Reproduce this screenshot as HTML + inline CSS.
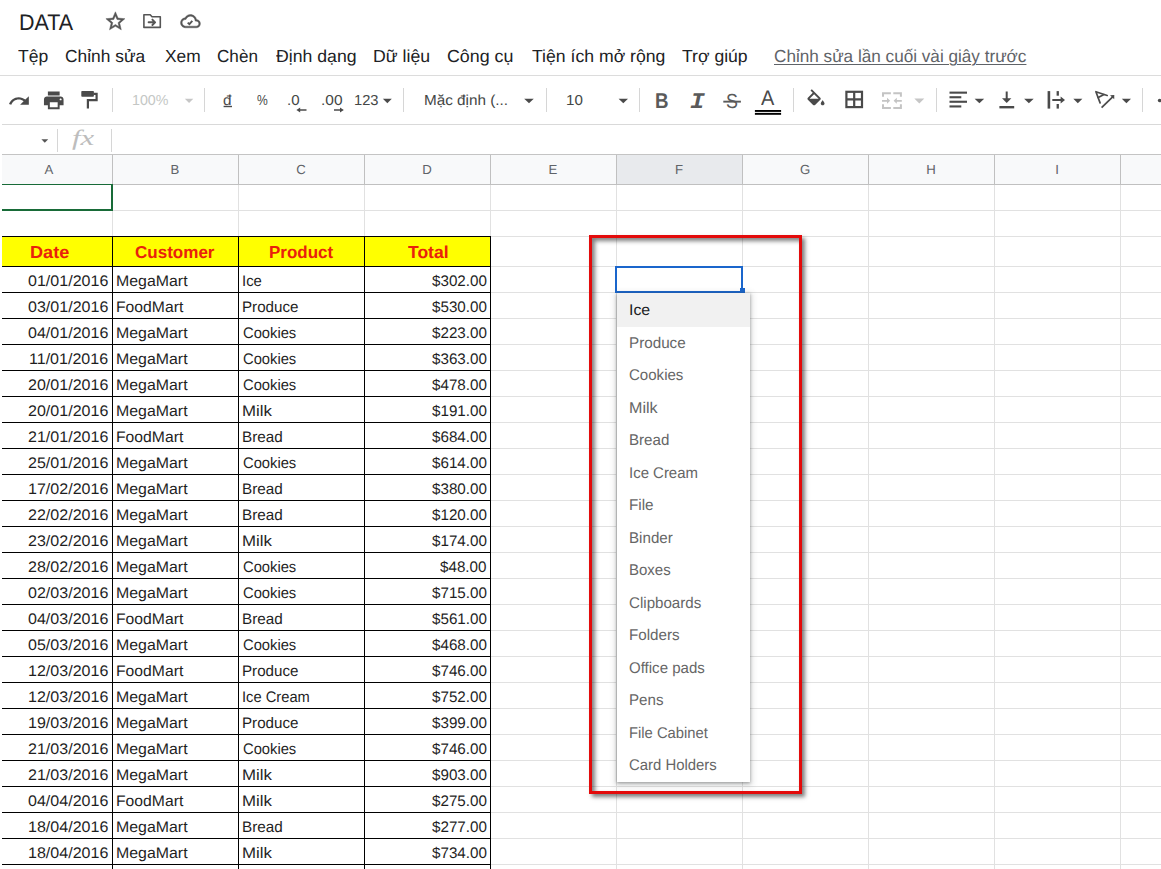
<!DOCTYPE html>
<html lang="vi">
<head>
<meta charset="utf-8">
<title>DATA</title>
<style>
html,body{margin:0;padding:0;}
body{width:1161px;height:869px;overflow:hidden;background:#fff;position:relative;font-family:"Liberation Sans",sans-serif;text-rendering:geometricPrecision;}
.t{position:absolute;white-space:nowrap;display:block;transform-origin:0 50%;}
.abs{position:absolute;}
.hl{position:absolute;height:1px;}
.vl{position:absolute;width:1px;}
svg{position:absolute;overflow:visible;}
</style>
</head>
<body>
<div class="hl" style="left:0;top:75px;width:1161px;background:#dcdcdc"></div>
<div class="hl" style="left:0;top:124px;width:1161px;background:#d9d9d9"></div>
<div class="hl" style="left:2px;top:154px;width:1159px;background:#c4c4c4"></div>
<div class="vl" style="left:112px;top:88px;height:24px;background:#d6d6d6"></div>
<div class="vl" style="left:204px;top:88px;height:24px;background:#d6d6d6"></div>
<div class="vl" style="left:403px;top:88px;height:24px;background:#d6d6d6"></div>
<div class="vl" style="left:546px;top:88px;height:24px;background:#d6d6d6"></div>
<div class="vl" style="left:638.5px;top:88px;height:24px;background:#d6d6d6"></div>
<div class="vl" style="left:792.5px;top:88px;height:24px;background:#d6d6d6"></div>
<div class="vl" style="left:936px;top:88px;height:24px;background:#d6d6d6"></div>
<div class="vl" style="left:1142px;top:88px;height:24px;background:#d6d6d6"></div>
<div class="vl" style="left:57px;top:129px;height:23px;background:#d6d6d6"></div>
<div class="vl" style="left:111px;top:129px;height:23px;background:#d6d6d6"></div>
<div class="abs" style="left:2px;top:155px;width:1159px;height:29px;background:#f8f9fa"></div>
<div class="abs" style="left:617px;top:155px;width:125px;height:29px;background:#e8eaed"></div>
<div class="hl" style="left:2px;top:184px;width:1159px;background:#c0c0c0"></div>
<div class="vl" style="left:112px;top:155px;height:30px;background:#c0c0c0"></div>
<div class="vl" style="left:112px;top:185px;height:684px;background:#e1e1e1"></div>
<div class="vl" style="left:238px;top:155px;height:30px;background:#c0c0c0"></div>
<div class="vl" style="left:238px;top:185px;height:684px;background:#e1e1e1"></div>
<div class="vl" style="left:364px;top:155px;height:30px;background:#c0c0c0"></div>
<div class="vl" style="left:364px;top:185px;height:684px;background:#e1e1e1"></div>
<div class="vl" style="left:490px;top:155px;height:30px;background:#c0c0c0"></div>
<div class="vl" style="left:490px;top:185px;height:684px;background:#e1e1e1"></div>
<div class="vl" style="left:616px;top:155px;height:30px;background:#c0c0c0"></div>
<div class="vl" style="left:616px;top:185px;height:684px;background:#e1e1e1"></div>
<div class="vl" style="left:742px;top:155px;height:30px;background:#c0c0c0"></div>
<div class="vl" style="left:742px;top:185px;height:684px;background:#e1e1e1"></div>
<div class="vl" style="left:868px;top:155px;height:30px;background:#c0c0c0"></div>
<div class="vl" style="left:868px;top:185px;height:684px;background:#e1e1e1"></div>
<div class="vl" style="left:994px;top:155px;height:30px;background:#c0c0c0"></div>
<div class="vl" style="left:994px;top:185px;height:684px;background:#e1e1e1"></div>
<div class="vl" style="left:1120px;top:155px;height:30px;background:#c0c0c0"></div>
<div class="vl" style="left:1120px;top:185px;height:684px;background:#e1e1e1"></div>
<div class="hl" style="left:2px;top:210px;width:1159px;background:#e1e1e1"></div>
<div class="hl" style="left:2px;top:236px;width:1159px;background:#e1e1e1"></div>
<div class="hl" style="left:2px;top:266px;width:1159px;background:#e1e1e1"></div>
<div class="hl" style="left:2px;top:292px;width:1159px;background:#e1e1e1"></div>
<div class="hl" style="left:2px;top:318px;width:1159px;background:#e1e1e1"></div>
<div class="hl" style="left:2px;top:344px;width:1159px;background:#e1e1e1"></div>
<div class="hl" style="left:2px;top:370px;width:1159px;background:#e1e1e1"></div>
<div class="hl" style="left:2px;top:396px;width:1159px;background:#e1e1e1"></div>
<div class="hl" style="left:2px;top:422px;width:1159px;background:#e1e1e1"></div>
<div class="hl" style="left:2px;top:448px;width:1159px;background:#e1e1e1"></div>
<div class="hl" style="left:2px;top:474px;width:1159px;background:#e1e1e1"></div>
<div class="hl" style="left:2px;top:500px;width:1159px;background:#e1e1e1"></div>
<div class="hl" style="left:2px;top:526px;width:1159px;background:#e1e1e1"></div>
<div class="hl" style="left:2px;top:552px;width:1159px;background:#e1e1e1"></div>
<div class="hl" style="left:2px;top:578px;width:1159px;background:#e1e1e1"></div>
<div class="hl" style="left:2px;top:604px;width:1159px;background:#e1e1e1"></div>
<div class="hl" style="left:2px;top:630px;width:1159px;background:#e1e1e1"></div>
<div class="hl" style="left:2px;top:656px;width:1159px;background:#e1e1e1"></div>
<div class="hl" style="left:2px;top:682px;width:1159px;background:#e1e1e1"></div>
<div class="hl" style="left:2px;top:708px;width:1159px;background:#e1e1e1"></div>
<div class="hl" style="left:2px;top:734px;width:1159px;background:#e1e1e1"></div>
<div class="hl" style="left:2px;top:760px;width:1159px;background:#e1e1e1"></div>
<div class="hl" style="left:2px;top:786px;width:1159px;background:#e1e1e1"></div>
<div class="hl" style="left:2px;top:812px;width:1159px;background:#e1e1e1"></div>
<div class="hl" style="left:2px;top:838px;width:1159px;background:#e1e1e1"></div>
<div class="hl" style="left:2px;top:864px;width:1159px;background:#e1e1e1"></div>
<div class="abs" style="left:2px;top:237px;width:488px;height:29px;background:#ffff00"></div>
<div class="hl" style="left:2px;top:236px;width:489px;background:#000"></div>
<div class="hl" style="left:2px;top:266px;width:489px;background:#000"></div>
<div class="hl" style="left:2px;top:292px;width:489px;background:#000"></div>
<div class="hl" style="left:2px;top:318px;width:489px;background:#000"></div>
<div class="hl" style="left:2px;top:344px;width:489px;background:#000"></div>
<div class="hl" style="left:2px;top:370px;width:489px;background:#000"></div>
<div class="hl" style="left:2px;top:396px;width:489px;background:#000"></div>
<div class="hl" style="left:2px;top:422px;width:489px;background:#000"></div>
<div class="hl" style="left:2px;top:448px;width:489px;background:#000"></div>
<div class="hl" style="left:2px;top:474px;width:489px;background:#000"></div>
<div class="hl" style="left:2px;top:500px;width:489px;background:#000"></div>
<div class="hl" style="left:2px;top:526px;width:489px;background:#000"></div>
<div class="hl" style="left:2px;top:552px;width:489px;background:#000"></div>
<div class="hl" style="left:2px;top:578px;width:489px;background:#000"></div>
<div class="hl" style="left:2px;top:604px;width:489px;background:#000"></div>
<div class="hl" style="left:2px;top:630px;width:489px;background:#000"></div>
<div class="hl" style="left:2px;top:656px;width:489px;background:#000"></div>
<div class="hl" style="left:2px;top:682px;width:489px;background:#000"></div>
<div class="hl" style="left:2px;top:708px;width:489px;background:#000"></div>
<div class="hl" style="left:2px;top:734px;width:489px;background:#000"></div>
<div class="hl" style="left:2px;top:760px;width:489px;background:#000"></div>
<div class="hl" style="left:2px;top:786px;width:489px;background:#000"></div>
<div class="hl" style="left:2px;top:812px;width:489px;background:#000"></div>
<div class="hl" style="left:2px;top:838px;width:489px;background:#000"></div>
<div class="hl" style="left:2px;top:864px;width:489px;background:#000"></div>
<div class="vl" style="left:112px;top:236px;height:633px;background:#000"></div>
<div class="vl" style="left:238px;top:236px;height:633px;background:#000"></div>
<div class="vl" style="left:364px;top:236px;height:633px;background:#000"></div>
<div class="vl" style="left:490px;top:236px;height:633px;background:#000"></div>
<div class="abs" style="left:-4px;top:184px;width:113px;height:24px;border:2px solid #186b38;border-top-width:1.5px"></div>
<div class="abs" style="left:589px;top:235px;width:207px;height:553px;border:3px solid #e30b0b;box-shadow:3px 3px 4px rgba(0,0,0,.5), inset 3px 3px 4px rgba(0,0,0,.5)"></div>
<div class="abs" style="left:615px;top:266px;width:124px;height:22.5px;border:2px solid #1a66cc;border-left-width:2.5px;background:#fff"></div>
<div class="abs" style="left:740px;top:288px;width:5px;height:5px;background:#1a66cc"></div>
<div class="abs" style="left:617px;top:293px;width:133px;height:489px;background:#fff;box-shadow:0 2px 6px 2px rgba(60,64,67,.17),0 1px 3px 0 rgba(40,40,40,.42)"></div>
<div class="abs" style="left:617px;top:293px;width:133px;height:34px;background:#f1f1f1"></div>
<svg width="1161" height="160" viewBox="0 0 1161 160" style="left:0;top:0">
<g transform="translate(104,9.9) scale(0.95)" fill="#555" stroke="#555" stroke-width="0.5"><path d="M22 9.24l-7.19-.62L12 2 9.19 8.63 2 9.24l5.46 4.73L5.82 21 12 17.27 18.18 21l-1.63-7.03L22 9.24zM12 15.4l-3.76 2.27 1-4.28-3.32-2.88 4.38-.38L12 6.1l1.71 4.04 4.38.38-3.32 2.88 1 4.28L12 15.4z"/></g>
<g fill="none" stroke="#555" stroke-width="1.6" stroke-linejoin="round" stroke-linecap="round"><path d="M143.9,14.8H150.2L152,16.7H160.3V27.4H143.9Z"/><path d="M148.6,22.3H155M152.4,19.6L155.1,22.3L152.4,25" stroke-width="1.9"/></g>
<g transform="translate(180.5,11.2) scale(0.83)" fill="#555" stroke="#555" stroke-width="0.5"><path d="M19.35 10.04C18.67 6.59 15.64 4 12 4 9.11 4 6.6 5.64 5.35 8.04 2.34 8.36 0 10.91 0 14c0 3.31 2.69 6 6 6h13c2.76 0 5-2.24 5-5 0-2.64-2.05-4.78-4.65-4.96zM19 18H6c-2.21 0-4-1.79-4-4 0-2.05 1.53-3.76 3.56-3.97l1.07-.11.5-.95C8.08 7.14 9.94 6 12 6c2.62 0 4.88 1.86 5.39 4.43l.3 1.5 1.53.11c1.56.1 2.78 1.41 2.78 2.96 0 1.65-1.35 3-3 3z"/></g>
<path d="M187.7,22.6L189.4,24.2L192.3,20.9" fill="none" stroke="#555" stroke-width="1.9"/>
<g transform="translate(7.5,89.5) scale(0.97,0.955)" fill="#4a4a4a"><path d="M18.4 10.6C16.55 8.99 14.15 8 11.5 8c-4.65 0-8.58 3.03-9.96 7.22L3.9 16c1.05-3.19 4.05-5.5 7.6-5.5 1.95 0 3.73.72 5.12 1.88L13 16h9V7l-3.6 3.6z"/></g>
<g transform="translate(42,88.6) scale(0.98)" fill="#4a4a4a"><path d="M19 8H5c-1.66 0-3 1.34-3 3v6h4v4h12v-4h4v-6c0-1.66-1.34-3-3-3zm-3 11H8v-5h8v5zm3-7c-.55 0-1-.45-1-1s.45-1 1-1 1 .45 1 1-.45 1-1 1zm-1-9H6v4h12V3z"/></g>
<rect x="81.3" y="91" width="12.6" height="5.8" rx="0.8" fill="#4a4a4a"/><path d="M93.5,93.9H96.6V100.2H87.9V108.5" fill="none" stroke="#4a4a4a" stroke-width="2.2"/>
<path d="M184.8,98.8H193.3L189.05,103Z" fill="#c6c6c6"/>
<path d="M382.9,98.7H391.8L387.35,103.3Z" fill="#4a4a4a"/>
<path d="M524.2,98.7H533.8L529.00,103.3Z" fill="#4a4a4a"/>
<path d="M618.6,98.7H628.0L623.30,103.3Z" fill="#4a4a4a"/>
<path d="M914.3,98.4H924.3L919.30,103.4Z" fill="#c6c6c6"/>
<path d="M974.6,98.7H984.2L979.40,103.3Z" fill="#4a4a4a"/>
<path d="M1024.1,98.7H1033.7L1028.90,103.3Z" fill="#4a4a4a"/>
<path d="M1073.3,98.7H1082.4L1077.85,103.3Z" fill="#4a4a4a"/>
<path d="M1121.8,98.7H1131.0L1126.40,103.3Z" fill="#4a4a4a"/>
<path d="M41.4,139.3H48.2L44.80,142.8Z" fill="#555"/>
<g fill="none" stroke="#4a4a4a" stroke-width="1.5"><path d="M306.5,110H298"/><path d="M334,110H342.3"/></g>
<path d="M296.4,110L300.2,107.6V112.4Z" fill="#4a4a4a"/><path d="M343.8,110L340,107.6V112.4Z" fill="#4a4a4a"/>
<rect x="223.6" y="105.8" width="8.4" height="1.4" fill="#4a4a4a"/>
<rect x="723.3" y="100.7" width="17.6" height="1.9" fill="#5a5a5a"/>
<rect x="754.9" y="110" width="26.2" height="1.9" fill="#000"/><rect x="754.9" y="112.9" width="26.2" height="1.9" fill="#000"/>
<g transform="translate(804.6,89.2) scale(0.95)" fill="#4a4a4a"><path d="M16.56 8.94L7.62 0 6.21 1.41l2.38 2.38-5.15 5.15c-.59.59-.59 1.54 0 2.12l5.5 5.5c.29.29.68.44 1.06.44s.77-.15 1.06-.44l5.5-5.5c.59-.58.59-1.53 0-2.12zM5.21 10L10 5.21 14.79 10H5.21zM19 11.5s-2 2.17-2 3.5c0 1.1.9 2 2 2s2-.9 2-2c0-1.33-2-3.5-2-3.5z"/></g>
<g fill="none" stroke="#4a4a4a" stroke-width="2.2"><rect x="846.4" y="91.8" width="15.6" height="15.3"/><path d="M854.2,91.8V107.1M846.4,99.45H862"/></g>
<g fill="none" stroke="#c4c4c4" stroke-width="2"><path d="M883,96.8V93.3H890.9M893.3,93.3H900.9V96.8M883,104.2V108.1H890.9M893.3,108.1H900.9V104.2"/><path d="M882,100.8H888.5M901.8,100.8H895.3" stroke-width="1.7"/></g><path d="M890.2,100.8L887,97.8V103.8ZM893.6,100.8L896.8,97.8V103.8Z" fill="#c4c4c4"/>
<g fill="#4a4a4a"><rect x="949.5" y="91.6" width="17.5" height="2.1"/><rect x="949.5" y="96.2" width="11.8" height="2.1"/><rect x="949.5" y="100.7" width="17.5" height="2.1"/><rect x="949.5" y="105.4" width="11.8" height="2.1"/></g>
<rect x="1005.7" y="91.5" width="2" height="8" fill="#4a4a4a"/><path d="M1002,98.3H1011.4L1006.7,103Z" fill="#4a4a4a"/><rect x="999.4" y="106" width="14.8" height="2.4" fill="#4a4a4a"/>
<g fill="#4a4a4a"><rect x="1047.6" y="91.1" width="2.6" height="17.5"/><rect x="1056.6" y="91.1" width="2.3" height="4.6"/><rect x="1056.6" y="104" width="2.3" height="4.6"/><rect x="1052.3" y="99" width="10" height="2"/><path d="M1065,100L1060.6,96.6V103.4Z"/></g>
<g fill="none" stroke="#4a4a4a" stroke-width="1.7" stroke-linecap="round" stroke-linejoin="round"><path d="M1107.2,95.5L1095.9,91.7L1100.1,102.9"/><path d="M1098.2,97.6L1104,94.6"/><path d="M1101.6,107.7L1113.2,96.4" stroke-linecap="butt"/></g><path d="M1110,95.3L1114.3,94.9L1114.2,99.2Z" fill="#4a4a4a"/>
<circle cx="1159.6" cy="100.5" r="1.8" fill="#4a4a4a"/>
</svg>

<div class="abs" style="left:0;top:76px;width:2px;height:793px;background:#fff"></div>
<span class="t" style="left:19.12px;top:8.01px;font-size:22.6px;line-height:29px;color:#202124;transform:scaleX(0.9500);">DATA</span>
<span class="t" style="left:17.93px;top:45.00px;font-size:17.4px;line-height:23px;color:#202124;transform:scaleX(1.0101);">Tệp</span>
<span class="t" style="left:65.19px;top:45.00px;font-size:17.4px;line-height:23px;color:#202124;transform:scaleX(0.9985);">Chỉnh sửa</span>
<span class="t" style="left:164.63px;top:45.00px;font-size:17.4px;line-height:23px;color:#202124;transform:scaleX(0.9970);">Xem</span>
<span class="t" style="left:217.20px;top:45.00px;font-size:17.4px;line-height:23px;color:#202124;transform:scaleX(0.9848);">Chèn</span>
<span class="t" style="left:275.80px;top:45.00px;font-size:17.4px;line-height:23px;color:#202124;transform:scaleX(1.0159);">Định dạng</span>
<span class="t" style="left:372.92px;top:45.00px;font-size:17.4px;line-height:23px;color:#202124;transform:scaleX(1.0168);">Dữ liệu</span>
<span class="t" style="left:446.96px;top:45.00px;font-size:17.4px;line-height:23px;color:#202124;transform:scaleX(1.0251);">Công cụ</span>
<span class="t" style="left:531.52px;top:45.00px;font-size:17.4px;line-height:23px;color:#202124;transform:scaleX(1.0138);">Tiện ích mở rộng</span>
<span class="t" style="left:682.42px;top:45.00px;font-size:17.4px;line-height:23px;color:#202124;transform:scaleX(1.0119);">Trợ giúp</span>
<span class="t" style="left:773.70px;top:45.00px;font-size:17.4px;line-height:23px;color:#5f6368;transform:scaleX(0.9859);text-decoration:underline;text-decoration-thickness:1px;text-underline-offset:1.5px;">Chỉnh sửa lần cuối vài giây trước</span>
<span class="t" style="left:131.71px;top:92.01px;font-size:14.5px;line-height:19px;color:#c4c7c5;transform:scaleX(0.9819);">100%</span>
<span class="t" style="left:257.42px;top:92.01px;font-size:14.5px;line-height:19px;color:#444746;transform:scaleX(0.8328);">%</span>
<span class="t" style="left:286.82px;top:92.01px;font-size:14.5px;line-height:19px;color:#444746;transform:scaleX(1.0378);">.0</span>
<span class="t" style="left:320.59px;top:92.01px;font-size:14.5px;line-height:19px;color:#444746;transform:scaleX(1.0663);">.00</span>
<span class="t" style="left:354.08px;top:92.01px;font-size:14.5px;line-height:19px;color:#444746;transform:scaleX(1.0133);">123</span>
<span class="t" style="left:423.81px;top:92.01px;font-size:14.5px;line-height:19px;color:#444746;transform:scaleX(1.0538);">Mặc định (...</span>
<span class="t" style="left:565.85px;top:92.01px;font-size:14.5px;line-height:19px;color:#444746;transform:scaleX(1.0430);">10</span>
<span class="t" style="left:223.22px;top:92.01px;font-size:14.5px;line-height:19px;color:#4a4a4a;transform:scaleX(1.0515);">đ</span>
<span class="t" style="left:654.83px;top:87.01px;font-size:21.4px;line-height:28px;color:#5a5a5a;font-weight:bold;transform:scaleX(0.8748);">B</span>
<span class="t" style="left:689.61px;top:88.01px;font-size:22.6px;line-height:29px;color:#5a5a5a;font-weight:bold;transform:scaleX(1.0955);font-family:'Liberation Mono',monospace;font-style:italic;">I</span>
<span class="t" style="left:726.24px;top:88.01px;font-size:20.5px;line-height:27px;color:#5a5a5a;transform:scaleX(0.8709);">S</span>
<span class="t" style="left:760.50px;top:85.00px;font-size:21px;line-height:27px;color:#4a4a4a;transform:scaleX(0.9497);">A</span>
<span class="t" style="left:72.30px;top:123.00px;font-size:22px;line-height:29px;color:#bdbdbd;transform:scaleX(1.4043);font-family:'Liberation Serif',serif;font-style:italic;">fx</span>
<span class="t" style="left:44.00px;top:161.00px;font-size:13.2px;line-height:17px;color:#5f6368;width:10.00px;text-align:center;">A</span>
<span class="t" style="left:170.00px;top:161.00px;font-size:13.2px;line-height:17px;color:#5f6368;width:10.00px;text-align:center;">B</span>
<span class="t" style="left:296.00px;top:161.00px;font-size:13.2px;line-height:17px;color:#5f6368;width:10.00px;text-align:center;">C</span>
<span class="t" style="left:422.00px;top:161.00px;font-size:13.2px;line-height:17px;color:#5f6368;width:10.00px;text-align:center;">D</span>
<span class="t" style="left:548.00px;top:161.00px;font-size:13.2px;line-height:17px;color:#5f6368;width:10.00px;text-align:center;">E</span>
<span class="t" style="left:674.00px;top:161.00px;font-size:13.2px;line-height:17px;color:#5f6368;width:10.00px;text-align:center;">F</span>
<span class="t" style="left:800.00px;top:161.00px;font-size:13.2px;line-height:17px;color:#5f6368;width:10.00px;text-align:center;">G</span>
<span class="t" style="left:926.00px;top:161.00px;font-size:13.2px;line-height:17px;color:#5f6368;width:10.00px;text-align:center;">H</span>
<span class="t" style="left:1052.00px;top:161.00px;font-size:13.2px;line-height:17px;color:#5f6368;width:10.00px;text-align:center;">I</span>
<span class="t" style="left:29.67px;top:241.01px;font-size:17.3px;line-height:22px;color:#e9210c;font-weight:bold;transform:scaleX(1.0476);">Date</span>
<span class="t" style="left:135.17px;top:241.01px;font-size:17.3px;line-height:22px;color:#e9210c;font-weight:bold;transform:scaleX(0.9855);">Customer</span>
<span class="t" style="left:268.94px;top:241.01px;font-size:17.3px;line-height:22px;color:#e9210c;font-weight:bold;transform:scaleX(0.9814);">Product</span>
<span class="t" style="left:408.30px;top:241.01px;font-size:17.3px;line-height:22px;color:#e9210c;font-weight:bold;transform:scaleX(1.0149);">Total</span>
<span class="t" style="left:27.50px;top:272.01px;font-size:15.3px;line-height:20px;color:#1f1f1f;transform:scaleX(1.0493);">01/01/2016</span>
<span class="t" style="left:116.16px;top:272.01px;font-size:15.3px;line-height:20px;color:#1f1f1f;transform:scaleX(1.0394);">MegaMart</span>
<span class="t" style="left:242.14px;top:272.01px;font-size:15.3px;line-height:20px;color:#1f1f1f;transform:scaleX(0.9734);">Ice</span>
<span class="t" style="left:432.00px;top:272.01px;font-size:15.3px;line-height:20px;color:#1f1f1f;transform:scaleX(0.9941);">$302.00</span>
<span class="t" style="left:27.50px;top:298.01px;font-size:15.3px;line-height:20px;color:#1f1f1f;transform:scaleX(1.0493);">03/01/2016</span>
<span class="t" style="left:116.17px;top:298.01px;font-size:15.3px;line-height:20px;color:#1f1f1f;transform:scaleX(1.0275);">FoodMart</span>
<span class="t" style="left:242.11px;top:298.01px;font-size:15.3px;line-height:20px;color:#1f1f1f;transform:scaleX(0.9915);">Produce</span>
<span class="t" style="left:432.00px;top:298.01px;font-size:15.3px;line-height:20px;color:#1f1f1f;transform:scaleX(0.9941);">$530.00</span>
<span class="t" style="left:27.50px;top:324.01px;font-size:15.3px;line-height:20px;color:#1f1f1f;transform:scaleX(1.0493);">04/01/2016</span>
<span class="t" style="left:116.16px;top:324.01px;font-size:15.3px;line-height:20px;color:#1f1f1f;transform:scaleX(1.0394);">MegaMart</span>
<span class="t" style="left:242.61px;top:324.01px;font-size:15.3px;line-height:20px;color:#1f1f1f;transform:scaleX(0.9634);">Cookies</span>
<span class="t" style="left:432.00px;top:324.01px;font-size:15.3px;line-height:20px;color:#1f1f1f;transform:scaleX(0.9941);">$223.00</span>
<span class="t" style="left:28.69px;top:350.01px;font-size:15.3px;line-height:20px;color:#1f1f1f;transform:scaleX(1.0493);">11/01/2016</span>
<span class="t" style="left:116.16px;top:350.01px;font-size:15.3px;line-height:20px;color:#1f1f1f;transform:scaleX(1.0394);">MegaMart</span>
<span class="t" style="left:242.61px;top:350.01px;font-size:15.3px;line-height:20px;color:#1f1f1f;transform:scaleX(0.9634);">Cookies</span>
<span class="t" style="left:432.00px;top:350.01px;font-size:15.3px;line-height:20px;color:#1f1f1f;transform:scaleX(0.9941);">$363.00</span>
<span class="t" style="left:27.50px;top:376.01px;font-size:15.3px;line-height:20px;color:#1f1f1f;transform:scaleX(1.0493);">20/01/2016</span>
<span class="t" style="left:116.16px;top:376.01px;font-size:15.3px;line-height:20px;color:#1f1f1f;transform:scaleX(1.0394);">MegaMart</span>
<span class="t" style="left:242.61px;top:376.01px;font-size:15.3px;line-height:20px;color:#1f1f1f;transform:scaleX(0.9634);">Cookies</span>
<span class="t" style="left:432.00px;top:376.01px;font-size:15.3px;line-height:20px;color:#1f1f1f;transform:scaleX(0.9941);">$478.00</span>
<span class="t" style="left:27.50px;top:402.01px;font-size:15.3px;line-height:20px;color:#1f1f1f;transform:scaleX(1.0493);">20/01/2016</span>
<span class="t" style="left:116.16px;top:402.01px;font-size:15.3px;line-height:20px;color:#1f1f1f;transform:scaleX(1.0394);">MegaMart</span>
<span class="t" style="left:241.98px;top:402.01px;font-size:15.3px;line-height:20px;color:#1f1f1f;transform:scaleX(1.1015);">Milk</span>
<span class="t" style="left:432.00px;top:402.01px;font-size:15.3px;line-height:20px;color:#1f1f1f;transform:scaleX(0.9941);">$191.00</span>
<span class="t" style="left:27.50px;top:428.01px;font-size:15.3px;line-height:20px;color:#1f1f1f;transform:scaleX(1.0493);">21/01/2016</span>
<span class="t" style="left:116.17px;top:428.01px;font-size:15.3px;line-height:20px;color:#1f1f1f;transform:scaleX(1.0275);">FoodMart</span>
<span class="t" style="left:242.11px;top:428.01px;font-size:15.3px;line-height:20px;color:#1f1f1f;transform:scaleX(0.9981);">Bread</span>
<span class="t" style="left:432.00px;top:428.01px;font-size:15.3px;line-height:20px;color:#1f1f1f;transform:scaleX(0.9941);">$684.00</span>
<span class="t" style="left:27.50px;top:454.01px;font-size:15.3px;line-height:20px;color:#1f1f1f;transform:scaleX(1.0493);">25/01/2016</span>
<span class="t" style="left:116.16px;top:454.01px;font-size:15.3px;line-height:20px;color:#1f1f1f;transform:scaleX(1.0394);">MegaMart</span>
<span class="t" style="left:242.61px;top:454.01px;font-size:15.3px;line-height:20px;color:#1f1f1f;transform:scaleX(0.9634);">Cookies</span>
<span class="t" style="left:432.00px;top:454.01px;font-size:15.3px;line-height:20px;color:#1f1f1f;transform:scaleX(0.9941);">$614.00</span>
<span class="t" style="left:27.50px;top:480.01px;font-size:15.3px;line-height:20px;color:#1f1f1f;transform:scaleX(1.0493);">17/02/2016</span>
<span class="t" style="left:116.16px;top:480.01px;font-size:15.3px;line-height:20px;color:#1f1f1f;transform:scaleX(1.0394);">MegaMart</span>
<span class="t" style="left:242.11px;top:480.01px;font-size:15.3px;line-height:20px;color:#1f1f1f;transform:scaleX(0.9981);">Bread</span>
<span class="t" style="left:432.00px;top:480.01px;font-size:15.3px;line-height:20px;color:#1f1f1f;transform:scaleX(0.9941);">$380.00</span>
<span class="t" style="left:27.50px;top:506.01px;font-size:15.3px;line-height:20px;color:#1f1f1f;transform:scaleX(1.0493);">22/02/2016</span>
<span class="t" style="left:116.16px;top:506.01px;font-size:15.3px;line-height:20px;color:#1f1f1f;transform:scaleX(1.0394);">MegaMart</span>
<span class="t" style="left:242.11px;top:506.01px;font-size:15.3px;line-height:20px;color:#1f1f1f;transform:scaleX(0.9981);">Bread</span>
<span class="t" style="left:432.00px;top:506.01px;font-size:15.3px;line-height:20px;color:#1f1f1f;transform:scaleX(0.9941);">$120.00</span>
<span class="t" style="left:27.50px;top:532.01px;font-size:15.3px;line-height:20px;color:#1f1f1f;transform:scaleX(1.0493);">23/02/2016</span>
<span class="t" style="left:116.16px;top:532.01px;font-size:15.3px;line-height:20px;color:#1f1f1f;transform:scaleX(1.0394);">MegaMart</span>
<span class="t" style="left:241.98px;top:532.01px;font-size:15.3px;line-height:20px;color:#1f1f1f;transform:scaleX(1.1015);">Milk</span>
<span class="t" style="left:432.00px;top:532.01px;font-size:15.3px;line-height:20px;color:#1f1f1f;transform:scaleX(0.9941);">$174.00</span>
<span class="t" style="left:27.50px;top:558.01px;font-size:15.3px;line-height:20px;color:#1f1f1f;transform:scaleX(1.0493);">28/02/2016</span>
<span class="t" style="left:116.16px;top:558.01px;font-size:15.3px;line-height:20px;color:#1f1f1f;transform:scaleX(1.0394);">MegaMart</span>
<span class="t" style="left:242.61px;top:558.01px;font-size:15.3px;line-height:20px;color:#1f1f1f;transform:scaleX(0.9634);">Cookies</span>
<span class="t" style="left:440.46px;top:558.01px;font-size:15.3px;line-height:20px;color:#1f1f1f;transform:scaleX(0.9941);">$48.00</span>
<span class="t" style="left:27.50px;top:584.01px;font-size:15.3px;line-height:20px;color:#1f1f1f;transform:scaleX(1.0493);">02/03/2016</span>
<span class="t" style="left:116.16px;top:584.01px;font-size:15.3px;line-height:20px;color:#1f1f1f;transform:scaleX(1.0394);">MegaMart</span>
<span class="t" style="left:242.61px;top:584.01px;font-size:15.3px;line-height:20px;color:#1f1f1f;transform:scaleX(0.9634);">Cookies</span>
<span class="t" style="left:432.00px;top:584.01px;font-size:15.3px;line-height:20px;color:#1f1f1f;transform:scaleX(0.9941);">$715.00</span>
<span class="t" style="left:27.50px;top:610.01px;font-size:15.3px;line-height:20px;color:#1f1f1f;transform:scaleX(1.0493);">04/03/2016</span>
<span class="t" style="left:116.17px;top:610.01px;font-size:15.3px;line-height:20px;color:#1f1f1f;transform:scaleX(1.0275);">FoodMart</span>
<span class="t" style="left:242.11px;top:610.01px;font-size:15.3px;line-height:20px;color:#1f1f1f;transform:scaleX(0.9981);">Bread</span>
<span class="t" style="left:432.00px;top:610.01px;font-size:15.3px;line-height:20px;color:#1f1f1f;transform:scaleX(0.9941);">$561.00</span>
<span class="t" style="left:27.50px;top:636.01px;font-size:15.3px;line-height:20px;color:#1f1f1f;transform:scaleX(1.0493);">05/03/2016</span>
<span class="t" style="left:116.16px;top:636.01px;font-size:15.3px;line-height:20px;color:#1f1f1f;transform:scaleX(1.0394);">MegaMart</span>
<span class="t" style="left:242.61px;top:636.01px;font-size:15.3px;line-height:20px;color:#1f1f1f;transform:scaleX(0.9634);">Cookies</span>
<span class="t" style="left:432.00px;top:636.01px;font-size:15.3px;line-height:20px;color:#1f1f1f;transform:scaleX(0.9941);">$468.00</span>
<span class="t" style="left:27.50px;top:662.01px;font-size:15.3px;line-height:20px;color:#1f1f1f;transform:scaleX(1.0493);">12/03/2016</span>
<span class="t" style="left:116.17px;top:662.01px;font-size:15.3px;line-height:20px;color:#1f1f1f;transform:scaleX(1.0275);">FoodMart</span>
<span class="t" style="left:242.11px;top:662.01px;font-size:15.3px;line-height:20px;color:#1f1f1f;transform:scaleX(0.9915);">Produce</span>
<span class="t" style="left:432.00px;top:662.01px;font-size:15.3px;line-height:20px;color:#1f1f1f;transform:scaleX(0.9941);">$746.00</span>
<span class="t" style="left:27.50px;top:688.01px;font-size:15.3px;line-height:20px;color:#1f1f1f;transform:scaleX(1.0493);">12/03/2016</span>
<span class="t" style="left:116.16px;top:688.01px;font-size:15.3px;line-height:20px;color:#1f1f1f;transform:scaleX(1.0394);">MegaMart</span>
<span class="t" style="left:242.15px;top:688.01px;font-size:15.3px;line-height:20px;color:#1f1f1f;transform:scaleX(0.9609);">Ice Cream</span>
<span class="t" style="left:432.00px;top:688.01px;font-size:15.3px;line-height:20px;color:#1f1f1f;transform:scaleX(0.9941);">$752.00</span>
<span class="t" style="left:27.50px;top:714.01px;font-size:15.3px;line-height:20px;color:#1f1f1f;transform:scaleX(1.0493);">19/03/2016</span>
<span class="t" style="left:116.16px;top:714.01px;font-size:15.3px;line-height:20px;color:#1f1f1f;transform:scaleX(1.0394);">MegaMart</span>
<span class="t" style="left:242.11px;top:714.01px;font-size:15.3px;line-height:20px;color:#1f1f1f;transform:scaleX(0.9915);">Produce</span>
<span class="t" style="left:432.00px;top:714.01px;font-size:15.3px;line-height:20px;color:#1f1f1f;transform:scaleX(0.9941);">$399.00</span>
<span class="t" style="left:27.50px;top:740.01px;font-size:15.3px;line-height:20px;color:#1f1f1f;transform:scaleX(1.0493);">21/03/2016</span>
<span class="t" style="left:116.16px;top:740.01px;font-size:15.3px;line-height:20px;color:#1f1f1f;transform:scaleX(1.0394);">MegaMart</span>
<span class="t" style="left:242.61px;top:740.01px;font-size:15.3px;line-height:20px;color:#1f1f1f;transform:scaleX(0.9634);">Cookies</span>
<span class="t" style="left:432.00px;top:740.01px;font-size:15.3px;line-height:20px;color:#1f1f1f;transform:scaleX(0.9941);">$746.00</span>
<span class="t" style="left:27.50px;top:766.01px;font-size:15.3px;line-height:20px;color:#1f1f1f;transform:scaleX(1.0493);">21/03/2016</span>
<span class="t" style="left:116.16px;top:766.01px;font-size:15.3px;line-height:20px;color:#1f1f1f;transform:scaleX(1.0394);">MegaMart</span>
<span class="t" style="left:241.98px;top:766.01px;font-size:15.3px;line-height:20px;color:#1f1f1f;transform:scaleX(1.1015);">Milk</span>
<span class="t" style="left:432.00px;top:766.01px;font-size:15.3px;line-height:20px;color:#1f1f1f;transform:scaleX(0.9941);">$903.00</span>
<span class="t" style="left:27.50px;top:792.01px;font-size:15.3px;line-height:20px;color:#1f1f1f;transform:scaleX(1.0493);">04/04/2016</span>
<span class="t" style="left:116.17px;top:792.01px;font-size:15.3px;line-height:20px;color:#1f1f1f;transform:scaleX(1.0275);">FoodMart</span>
<span class="t" style="left:241.98px;top:792.01px;font-size:15.3px;line-height:20px;color:#1f1f1f;transform:scaleX(1.1015);">Milk</span>
<span class="t" style="left:432.00px;top:792.01px;font-size:15.3px;line-height:20px;color:#1f1f1f;transform:scaleX(0.9941);">$275.00</span>
<span class="t" style="left:27.50px;top:818.01px;font-size:15.3px;line-height:20px;color:#1f1f1f;transform:scaleX(1.0493);">18/04/2016</span>
<span class="t" style="left:116.16px;top:818.01px;font-size:15.3px;line-height:20px;color:#1f1f1f;transform:scaleX(1.0394);">MegaMart</span>
<span class="t" style="left:242.11px;top:818.01px;font-size:15.3px;line-height:20px;color:#1f1f1f;transform:scaleX(0.9981);">Bread</span>
<span class="t" style="left:432.00px;top:818.01px;font-size:15.3px;line-height:20px;color:#1f1f1f;transform:scaleX(0.9941);">$277.00</span>
<span class="t" style="left:27.50px;top:844.01px;font-size:15.3px;line-height:20px;color:#1f1f1f;transform:scaleX(1.0493);">18/04/2016</span>
<span class="t" style="left:116.16px;top:844.01px;font-size:15.3px;line-height:20px;color:#1f1f1f;transform:scaleX(1.0394);">MegaMart</span>
<span class="t" style="left:241.98px;top:844.01px;font-size:15.3px;line-height:20px;color:#1f1f1f;transform:scaleX(1.1015);">Milk</span>
<span class="t" style="left:432.00px;top:844.01px;font-size:15.3px;line-height:20px;color:#1f1f1f;transform:scaleX(0.9941);">$734.00</span>
<span class="t" style="left:628.76px;top:301.00px;font-size:15.5px;line-height:20px;color:#202124;transform:scaleX(1.0245);">Ice</span>
<span class="t" style="left:628.81px;top:334.00px;font-size:15.5px;line-height:20px;color:#666666;transform:scaleX(0.9822);">Produce</span>
<span class="t" style="left:629.29px;top:366.00px;font-size:15.5px;line-height:20px;color:#666666;transform:scaleX(0.9710);">Cookies</span>
<span class="t" style="left:628.74px;top:399.00px;font-size:15.5px;line-height:20px;color:#666666;transform:scaleX(1.0384);">Milk</span>
<span class="t" style="left:628.82px;top:431.00px;font-size:15.5px;line-height:20px;color:#666666;transform:scaleX(0.9751);">Bread</span>
<span class="t" style="left:628.83px;top:464.00px;font-size:15.5px;line-height:20px;color:#666666;transform:scaleX(0.9643);">Ice Cream</span>
<span class="t" style="left:628.81px;top:496.00px;font-size:15.5px;line-height:20px;color:#666666;transform:scaleX(0.9855);">File</span>
<span class="t" style="left:628.82px;top:529.00px;font-size:15.5px;line-height:20px;color:#666666;transform:scaleX(0.9766);">Binder</span>
<span class="t" style="left:628.83px;top:561.00px;font-size:15.5px;line-height:20px;color:#666666;transform:scaleX(0.9666);">Boxes</span>
<span class="t" style="left:629.29px;top:594.00px;font-size:15.5px;line-height:20px;color:#666666;transform:scaleX(0.9755);">Clipboards</span>
<span class="t" style="left:628.81px;top:626.00px;font-size:15.5px;line-height:20px;color:#666666;transform:scaleX(0.9802);">Folders</span>
<span class="t" style="left:629.30px;top:659.00px;font-size:15.5px;line-height:20px;color:#666666;transform:scaleX(0.9700);">Office pads</span>
<span class="t" style="left:628.82px;top:691.00px;font-size:15.5px;line-height:20px;color:#666666;transform:scaleX(0.9752);">Pens</span>
<span class="t" style="left:628.85px;top:724.00px;font-size:15.5px;line-height:20px;color:#666666;transform:scaleX(0.9528);">File Cabinet</span>
<span class="t" style="left:629.30px;top:756.00px;font-size:15.5px;line-height:20px;color:#666666;transform:scaleX(0.9611);">Card Holders</span>

</body>
</html>
